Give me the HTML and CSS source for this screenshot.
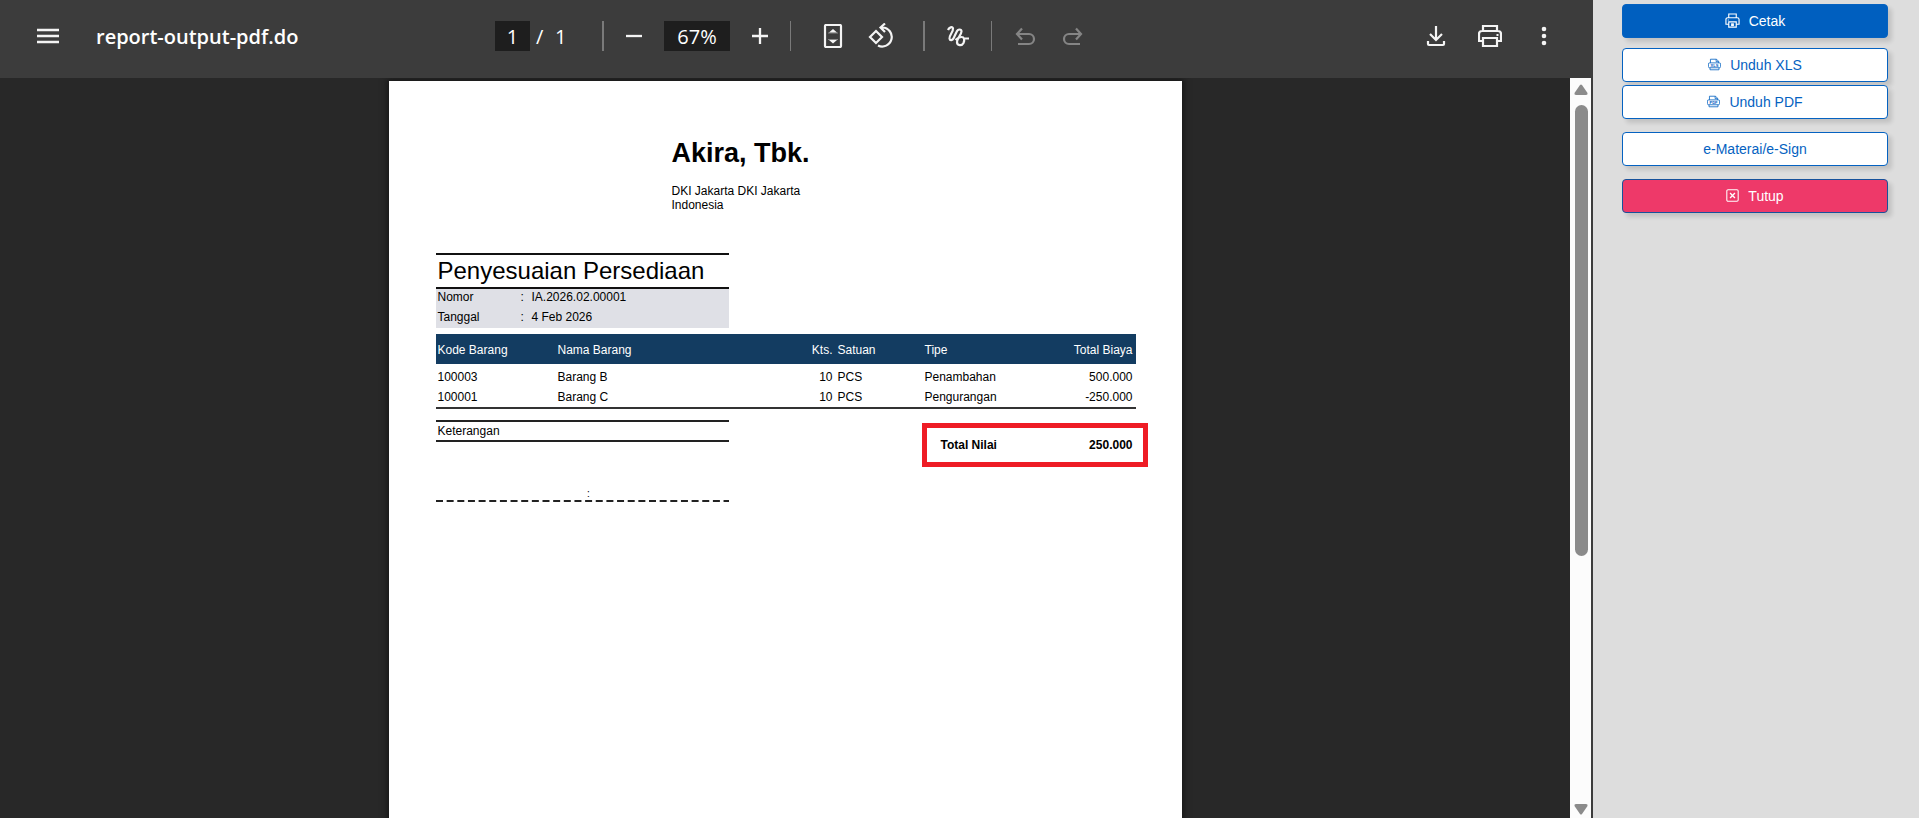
FILE: index.html
```html
<!DOCTYPE html>
<html lang="id">
<head>
<meta charset="utf-8">
<title>report-output-pdf.do</title>
<link rel="stylesheet" href="styles.css">
</head>
<body>
<main class="viewer">
  <header class="toolbar">
    <div class="toolbar-start">
      <button class="tool" aria-label="Menu"><svg class="icon" viewBox="0 0 24 24"><path d="M1 6h22M1 12h22M1 18h22" stroke-width="2.400"/></svg></button>
      <h1 class="file-name">report-output-pdf.do</h1>
    </div>
    <div class="toolbar-center">
      <label class="pager"><input class="field page-field" type="text" value="1" aria-label="Halaman"><span class="slash">/</span><span>1</span></label>
      <span class="divider divider-near divider-bold"></span>
      <button class="tool" aria-label="Perkecil"><svg class="icon" viewBox="0 0 24 24"><path d="M4 12h16" stroke-width="2.300"/></svg></button>
      <input class="field zoom-field" type="text" value="67%" aria-label="Zoom">
      <button class="tool" aria-label="Perbesar"><svg class="icon" viewBox="0 0 24 24"><path d="M4 12h16M12 4v16" stroke-width="2.300"/></svg></button>
      <span class="divider divider-near divider-wide"></span>
      <button class="tool" aria-label="Sesuaikan halaman"><svg class="icon" viewBox="0 0 24 24"><rect x="4" y="1" width="16" height="22" rx="1" stroke-width="2.200"/><path class="solid" d="M12 5l4 3.500H8zM12 19.500l4-3.500H8z"/><path d="M7 9h10M7 15.500h10" stroke-width="1" opacity=".4"/></svg></button>
      <button class="tool" aria-label="Putar"><svg class="icon wide-icon" viewBox="0 0 26 26"><path d="M8 8l6 6-6 6-6-6zM12.500 4.500h2a9.500 9.500 0 1 1-4.500 18M17 .5l-4.500 4 4.500 4.500" stroke-width="2.200"/></svg></button>
      <span class="divider divider-wide-start divider-bold"></span>
      <button class="tool" aria-label="Gambar"><svg class="icon" viewBox="0 0 24 24"><path d="M2 6C3 3.500 6.500 2 7 4.500 7.500 7.500 3 11.500 3.500 14.500c.5 2.500 3 2 4.200-.5L10.500 8c1.500-3.500 5-3 5-.5-.2 3.500-4.500 6.500-4.500 10.500 0 4 5 4 6.500 1 1.500-3.500.5-6-2-6-3 0-4.500 1.500-6 3M23 14.500h-5" stroke-width="2.200"/></svg></button>
      <span class="divider"></span>
      <button class="tool" aria-label="Urungkan" disabled><svg class="icon" viewBox="0 0 24 24"><path d="M9 4.500L4 10l5 5.500M4 10h12a5 5 0 0 1 0 10H5" stroke-width="2.200"/></svg></button>
      <button class="tool" aria-label="Ulangi" disabled><svg class="icon" viewBox="0 0 24 24"><path d="M15 4.500l5 5.500-5 5.500M20 10H8a5 5 0 0 0 0 10h11" stroke-width="2.200"/></svg></button>
    </div>
    <div class="toolbar-end">
      <button class="tool" aria-label="Unduh"><svg class="icon" viewBox="0 0 24 24"><path d="M12 2v14M6 10l6 6 6-6M4 17v3q0 1 1 1h14q1 0 1-1v-3" stroke-width="2.200"/></svg></button>
      <button class="tool" aria-label="Cetak dokumen"><svg class="icon" viewBox="0 0 24 24"><path d="M5 7V2h14v5M5 17H1v-7q0-3 3-3h16q3 0 3 3v7h-4M5 14h14v8H5z" stroke-width="2.200"/><path d="M18.500 11h2" stroke-width="2"/></svg></button>
      <button class="tool" aria-label="Lainnya"><svg class="icon" viewBox="0 0 24 24"><g class="solid"><circle cx="12" cy="5" r="2.300"/><circle cx="12" cy="12" r="2.300"/><circle cx="12" cy="19" r="2.300"/></g></svg></button>
    </div>
  </header>

  <div class="stage">
    <div class="canvas">
      <article class="sheet">
        <header class="company">
          <h2 class="company-name">Akira, Tbk.</h2>
          <p class="company-address">DKI Jakarta DKI Jakarta<br>Indonesia</p>
        </header>

        <section class="summary">
          <h3 class="doc-title">Penyesuaian Persediaan</h3>
          <dl class="meta">
            <dt>Nomor</dt><dd>:</dd><dd>IA.2026.02.00001</dd>
            <dt>Tanggal</dt><dd>:</dd><dd>4 Feb 2026</dd>
          </dl>
        </section>

        <table class="items">
          <colgroup><col class="col-code"><col><col class="col-qty"><col class="col-unit"><col class="col-type"><col class="col-cost"></colgroup>
          <thead>
            <tr><th>Kode Barang</th><th>Nama Barang</th><th class="num">Kts.</th><th>Satuan</th><th>Tipe</th><th class="num">Total Biaya</th></tr>
          </thead>
          <tbody>
            <tr><td>100003</td><td>Barang B</td><td class="num">10</td><td>PCS</td><td>Penambahan</td><td class="num">500.000</td></tr>
            <tr><td>100001</td><td>Barang C</td><td class="num">10</td><td>PCS</td><td>Pengurangan</td><td class="num">-250.000</td></tr>
          </tbody>
        </table>

        <div class="closing">
          <div class="notes">
            <p class="notes-title">Keterangan</p>
            <p class="signature">:</p>
            <svg class="signature-line" width="100%" height="2"><line x1="0" y1="1" x2="100%" y2="1" stroke="#222" stroke-width="2" stroke-dasharray="7 3.650"/></svg>
          </div>
          <p class="total"><span>Total Nilai</span><span>250.000</span></p>
        </div>
      </article>
    </div>
    <div class="scrollbar" aria-hidden="true">
      <svg class="arrow" viewBox="0 0 14 11"><path d="M6 1q1-1 2 0l5.500 8q.5 2-1.500 2H2Q0 11 .5 9z"/></svg>
      <div class="track"><div class="thumb"></div></div>
      <svg class="arrow" viewBox="0 0 14 11"><path d="M6 10q1 1 2 0l5.500-8q.5-2-1.500-2H2Q0 0 .5 2z"/></svg>
    </div>
  </div>
</main>

<aside class="actions">
  <button class="action action-primary"><svg class="action-icon" viewBox="0 0 16 16"><path d="M4 5V1h8v4M4 12H1V7q0-2 2-2h10q2 0 2 2v5h-3M4 9.500h8V15H4zM3 7.500h1" stroke-width="1.200"/><path class="solid" d="M6.500 11h3v3h-3z"/></svg>Cetak</button>
  <div class="action-group">
    <button class="action"><svg class="action-icon action-icon-small" viewBox="0 0 16 16"><path d="M3 6V1.500h7.500L13 4v2M10 1.500v3h3M2 6h12q1.500 0 1.500 1.500v3q0 1.500-1.500 1.500H2Q.5 12 .5 10.500v-3Q.5 6 2 6zM2.500 12v2.500h11V12"/><text class="icon-label" x="8" y="11">XLS</text></svg>Unduh XLS</button>
    <button class="action"><svg class="action-icon action-icon-small" viewBox="0 0 16 16"><path d="M3 6V1.500h7.500L13 4v2M10 1.500v3h3M2 6h12q1.500 0 1.500 1.500v3q0 1.500-1.500 1.500H2Q.5 12 .5 10.500v-3Q.5 6 2 6zM2.500 12v2.500h11V12"/><text class="icon-label" x="8" y="11">PDF</text></svg>Unduh PDF</button>
  </div>
  <button class="action">e-Materai/e-Sign</button>
  <button class="action action-danger"><svg class="action-icon action-icon-small" viewBox="0 0 16 16"><rect x="1" y="1" width="14" height="14" rx="1.500" stroke-width="1.300"/><path d="M5 5l6 6M11 5l-6 6" stroke-width="1.700"/></svg>Tutup</button>
</aside>
</body>
</html>
```
FILE: styles.css
```css
* { box-sizing: border-box; }
body {
  margin: 0;
  height: 100vh;
  padding-bottom: 1px;
  display: flex;
  overflow: hidden;
  background: #fff;
  font-family: "Liberation Sans", Arial, sans-serif;
}
h1, h2, h3, p, dl, dd { margin: 0; font-weight: normal; }
button, input { font: inherit; }

.viewer {
  flex: 1;
  min-width: 0;
  display: flex;
  flex-direction: column;
  border-right: 2px solid #3c3c3c;
  background: #282828;
}
.toolbar {
  height: 78px;
  flex: none;
  display: grid;
  grid-template-columns: 1fr auto 1fr;
  align-items: center;
  padding: 0 23px 6px 24px;
  background: #3c3c3c;
  color: #fff;
  font-family: "Open Sans", "Noto Sans", sans-serif;
  font-size: 20px;
}
.toolbar-start, .toolbar-center, .toolbar-end, .pager { display: flex; align-items: center; }
.toolbar-start { gap: 24px; }
.toolbar-end { justify-content: flex-end; gap: 6px; }
.file-name { padding-top: 2px; font-size: 20px; line-height: 28px; font-weight: 600; }
.tool {
  width: 48px;
  height: 48px;
  padding: 0;
  border: 0;
  background: none;
  display: grid;
  place-items: center;
  color: #f4f4f4;
}
.tool:disabled { color: #858585; }
.icon { width: 24px; height: 24px; fill: none; stroke: currentColor; }
.wide-icon { width: 26px; height: 26px; }
.solid { fill: currentColor; stroke: none; }
.field {
  height: 30px;
  padding: 0;
  border: 0;
  background: #1e1e1e;
  color: #fff;
  text-align: center;
}
.page-field { width: 35px; }
.zoom-field { width: 66px; margin: 0 6px; }
.slash { width: 25px; padding-left: 6px; }
.pager { width: 101px; }
.divider { width: 1px; height: 30px; margin: 0 9px; background: #7a7a7a; }
.divider-bold { width: 2px; }
.divider-near { margin: 0 6px; }
.divider-wide { margin-right: 18px; }
.divider-wide-start { margin-left: 18px; }

.stage { flex: 1; min-height: 0; display: flex; }
.canvas { flex: 1; overflow: hidden; display: flex; justify-content: center; padding-top: 3px; }
.sheet {
  width: 793px;
  height: 1122px;
  padding: 56px 46px 0 47px;
  background: #fff;
  box-shadow: 0 0 6px 2px #181818;
  color: #000;
  font-size: 12px;
  line-height: 14px;
}
.company { padding-left: 236px; }
.company-name { font-size: 27px; line-height: 32px; font-weight: bold; }
.company-address { margin-top: 15px; }
.summary { width: 293px; margin-top: 41px; }
.doc-title {
  padding: 0 2px;
  border: solid #111;
  border-width: 2px 0;
  font-size: 24px;
  line-height: 32px;
}
.meta {
  display: grid;
  grid-template-columns: 83px 11px 1fr;
  row-gap: 4px;
  padding: 0 2px 3px;
  background: #dfe0e6;
  line-height: 16px;
}
.items {
  width: 100%;
  margin-top: 6px;
  border-collapse: separate;
  border-spacing: 0;
  border-bottom: 2px solid #333;
  table-layout: fixed;
}
.items th, .items td { padding: 0 3px 0 2px; text-align: left; font-weight: normal; line-height: 20px; }
.items th { height: 30px; padding-top: 2px; background: #133c61; color: #fff; }
.items tbody tr:first-child td { padding-top: 3px; }
.items .num { text-align: right; }
.col-code { width: 120px; }
.col-qty { width: 100px; }
.col-unit { width: 87px; }
.col-type { width: 107px; }
.col-cost { width: 106px; }

.closing { display: flex; justify-content: space-between; align-items: flex-start; margin-top: 11px; }
.notes { width: 293px; }
.notes-title { padding: 0 2px; border: solid #222; border-width: 2px 0; line-height: 18px; }
.signature { margin-top: 46px; padding-left: 13px; text-align: center; font-size: 10px; line-height: 12px; }
.signature-line { display: block; }
.total {
  width: 226px;
  margin: 3px -12px 0 0;
  padding: 10px 10px 10px 14px;
  display: flex;
  justify-content: space-between;
  border: 5px solid #ee1c25;
  font-weight: bold;
}

.scrollbar {
  width: 21px;
  padding: 6px 4px 3px 5px;
  display: flex;
  flex-direction: column;
  align-items: center;
  gap: 10px;
  background: #fcfcfc;
}
.arrow { width: 14px; height: 11px; flex: none; fill: #8b8b8b; }
.track { flex: 1; width: 13px; }
.thumb { height: 65.5%; border-radius: 7px; background: #8b8b8b; }

.actions {
  width: 326px;
  flex: none;
  padding: 4px 31px 0 29px;
  display: flex;
  flex-direction: column;
  gap: 13px;
  background: #ddd;
}
.action-group { display: grid; gap: 3px; margin-top: -3px; }
.action {
  width: 100%;
  height: 34px;
  padding: 0;
  display: flex;
  align-items: center;
  justify-content: center;
  gap: 9px;
  border: 1px solid #0562c1;
  border-radius: 4px;
  background: #fff;
  color: #0562c1;
  font-size: 14px;
  box-shadow: 4px 4px 4px rgba(0, 0, 0, .12);
}
.action-primary { background: #005fbf; color: #fff; }
.action-danger { background: #ee3969; color: #fff; border-color: #17529b; }
.action-icon { width: 15px; height: 15px; margin-bottom: 2px; fill: none; stroke: currentColor; }
.action-icon-small { width: 13px; height: 13px; }
.icon-label { fill: currentColor; stroke: none; font-size: 5px; font-weight: bold; text-anchor: middle; }
```
